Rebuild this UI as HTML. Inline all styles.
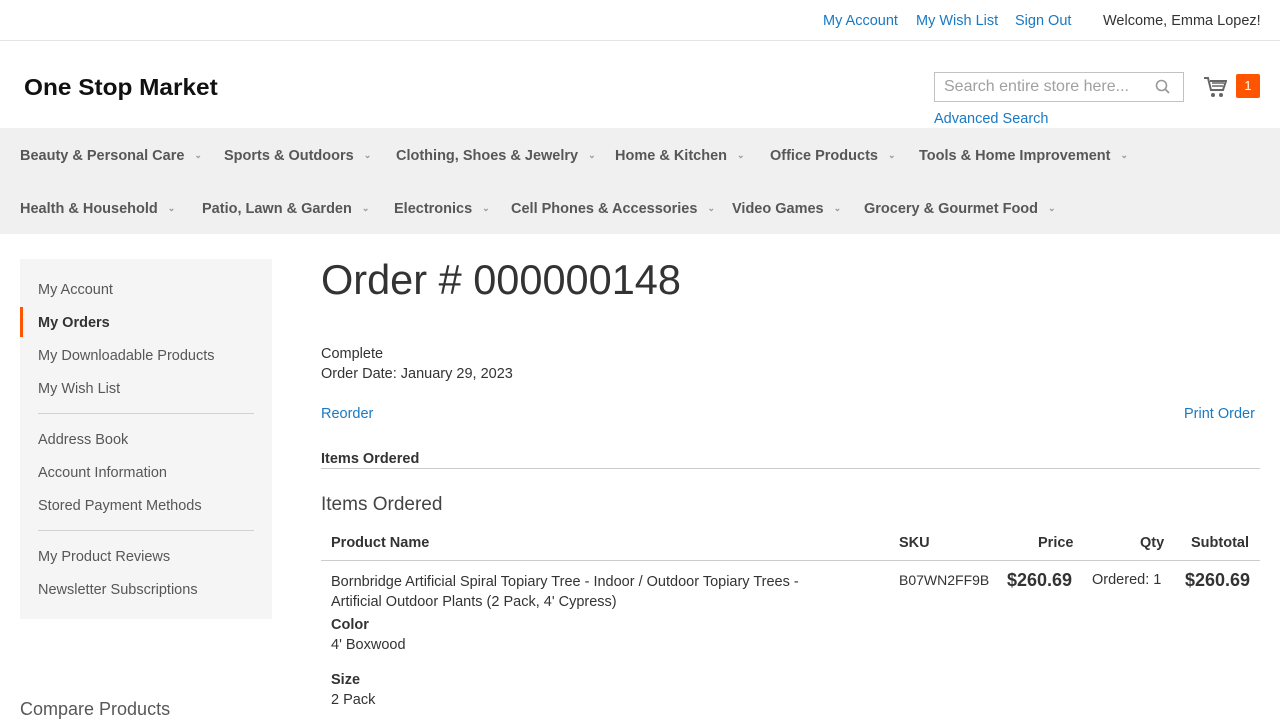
<!DOCTYPE html>
<html><head><meta charset="utf-8"><style>
*{margin:0;padding:0;box-sizing:border-box}
body{width:1280px;height:720px;overflow:hidden;font-family:"Liberation Sans",sans-serif;color:#333;background:#fff;position:relative;font-size:14px}
.a{position:absolute;white-space:nowrap}
.t{margin-top:2px}
.lnk{color:#1979c3}
.nav{font-weight:bold;font-size:14.5px;color:#575757;margin-top:2px}
.nav i{font-style:normal;font-size:9px;color:#999;margin-left:10px;vertical-align:2px}
.side{font-size:14.5px;color:#575757;margin-top:2px}
</style></head><body>
<div class="a" style="left:0;top:40px;width:1280px;height:1px;background:#e5e5e5"></div>
<div class="a lnk t" style="left:823px;top:11px;font-size:14.5px">My Account</div>
<div class="a lnk t" style="left:916px;top:11px;font-size:14.5px">My Wish List</div>
<div class="a lnk t" style="left:1015px;top:11px;font-size:14.5px">Sign Out</div>
<div class="a t" style="left:1103px;top:11px;font-size:14.5px">Welcome, Emma Lopez!</div>
<div class="a" style="left:24px;top:74px;font-size:23px;font-weight:bold;color:#111;transform:scaleX(1.06);transform-origin:left">One Stop Market</div>
<div class="a" style="left:934px;top:72px;width:250px;height:30px;border:1px solid #c2c2c2;background:#fff"></div>
<div class="a" style="left:944px;top:78px;font-size:16px;color:#a0a0a0">Search entire store here...</div>
<svg class="a" style="left:1155px;top:79px" width="16" height="16"><circle cx="6.5" cy="6.5" r="5" fill="none" stroke="#999" stroke-width="1.6"/><line x1="10" y1="10" x2="14" y2="14" stroke="#999" stroke-width="1.8"/></svg>
<div class="a lnk t" style="left:934px;top:109px;font-size:14.5px">Advanced Search</div>
<svg class="a" style="left:1203px;top:75px" width="24" height="24"><path d="M1 3h4l3 12h12l3-9H7" fill="none" stroke="#666" stroke-width="2"/><path d="M9 8h12M9 11h11" stroke="#666" stroke-width="1.5"/><circle cx="10" cy="20" r="2" fill="#666"/><circle cx="18" cy="20" r="2" fill="#666"/></svg>
<div class="a" style="left:1236px;top:74px;width:24px;height:24px;background:#ff5501;border-radius:2px;color:#fff;font-size:13px;text-align:center;line-height:24px">1</div>
<div class="a" style="left:0;top:128px;width:1280px;height:106px;background:#f0f0f0"></div>
<div class="a nav" style="left:20px;top:146px">Beauty &amp; Personal Care<i>⌄</i></div>
<div class="a nav" style="left:224px;top:146px">Sports &amp; Outdoors<i>⌄</i></div>
<div class="a nav" style="left:396px;top:146px">Clothing, Shoes &amp; Jewelry<i>⌄</i></div>
<div class="a nav" style="left:615px;top:146px">Home &amp; Kitchen<i>⌄</i></div>
<div class="a nav" style="left:770px;top:146px">Office Products<i>⌄</i></div>
<div class="a nav" style="left:919px;top:146px">Tools &amp; Home Improvement<i>⌄</i></div>
<div class="a nav" style="left:20px;top:199px">Health &amp; Household<i>⌄</i></div>
<div class="a nav" style="left:202px;top:199px">Patio, Lawn &amp; Garden<i>⌄</i></div>
<div class="a nav" style="left:394px;top:199px">Electronics<i>⌄</i></div>
<div class="a nav" style="left:511px;top:199px">Cell Phones &amp; Accessories<i>⌄</i></div>
<div class="a nav" style="left:732px;top:199px">Video Games<i>⌄</i></div>
<div class="a nav" style="left:864px;top:199px">Grocery &amp; Gourmet Food<i>⌄</i></div>
<div class="a" style="left:20px;top:259px;width:252px;height:360px;background:#f5f5f5"></div>
<div class="a side" style="left:38px;top:280px">My Account</div>
<div class="a" style="left:20px;top:307px;width:3px;height:30px;background:#ff5501"></div>
<div class="a side" style="left:38px;top:313px;font-weight:bold;color:#333">My Orders</div>
<div class="a side" style="left:38px;top:346px">My Downloadable Products</div>
<div class="a side" style="left:38px;top:379px">My Wish List</div>
<div class="a" style="left:38px;top:413px;width:216px;height:1px;background:#d1d1d1"></div>
<div class="a side" style="left:38px;top:430px">Address Book</div>
<div class="a side" style="left:38px;top:463px">Account Information</div>
<div class="a side" style="left:38px;top:496px">Stored Payment Methods</div>
<div class="a" style="left:38px;top:530px;width:216px;height:1px;background:#d1d1d1"></div>
<div class="a side" style="left:38px;top:547px">My Product Reviews</div>
<div class="a side" style="left:38px;top:580px">Newsletter Subscriptions</div>
<div class="a" style="left:20px;top:699px;font-size:18px;color:#575757">Compare Products</div>
<div class="a" style="left:321px;top:256px;font-size:41.5px;font-weight:300;color:#333">Order # 000000148</div>
<div class="a t" style="left:321px;top:344px;font-size:14.5px">Complete</div>
<div class="a t" style="left:321px;top:364px;font-size:14.5px">Order Date: January 29, 2023</div>
<div class="a lnk t" style="left:321px;top:404px;font-size:14.5px">Reorder</div>
<div class="a lnk t" style="left:1184px;top:404px;font-size:14.5px">Print Order</div>
<div class="a t" style="left:321px;top:449px;font-size:14.5px;font-weight:bold">Items Ordered</div>
<div class="a" style="left:321px;top:468px;width:939px;height:1px;background:#ccc"></div>
<div class="a" style="left:321px;top:494px;font-size:19px;font-weight:300;color:#444">Items Ordered</div>
<div class="a t" style="left:331px;top:533px;font-size:14.5px;font-weight:bold">Product Name</div>
<div class="a t" style="left:899px;top:533px;font-size:14.5px;font-weight:bold">SKU</div>
<div class="a t" style="left:1038px;top:533px;font-size:14.5px;font-weight:bold">Price</div>
<div class="a t" style="left:1140px;top:533px;font-size:14.5px;font-weight:bold">Qty</div>
<div class="a t" style="left:1191px;top:533px;font-size:14.5px;font-weight:bold">Subtotal</div>
<div class="a" style="left:321px;top:560px;width:939px;height:1px;background:#ccc"></div>
<div class="a t" style="left:331px;top:570px;font-size:14.5px;line-height:20px">Bornbridge Artificial Spiral Topiary Tree - Indoor / Outdoor Topiary Trees -<br>Artificial Outdoor Plants (2 Pack, 4' Cypress)</div>
<div class="a t" style="left:331px;top:615px;font-size:14.5px;font-weight:bold">Color</div>
<div class="a t" style="left:331px;top:635px;font-size:14.5px">4' Boxwood</div>
<div class="a t" style="left:331px;top:670px;font-size:14.5px;font-weight:bold">Size</div>
<div class="a t" style="left:331px;top:690px;font-size:14.5px">2 Pack</div>
<div class="a t" style="left:899px;top:570px;font-size:14px">B07WN2FF9B</div>
<div class="a" style="left:1007px;top:570px;font-size:18px;font-weight:bold">$260.69</div>
<div class="a t" style="left:1092px;top:570px;font-size:14.5px">Ordered: 1</div>
<div class="a" style="left:1185px;top:570px;font-size:18px;font-weight:bold">$260.69</div>
</body></html>
